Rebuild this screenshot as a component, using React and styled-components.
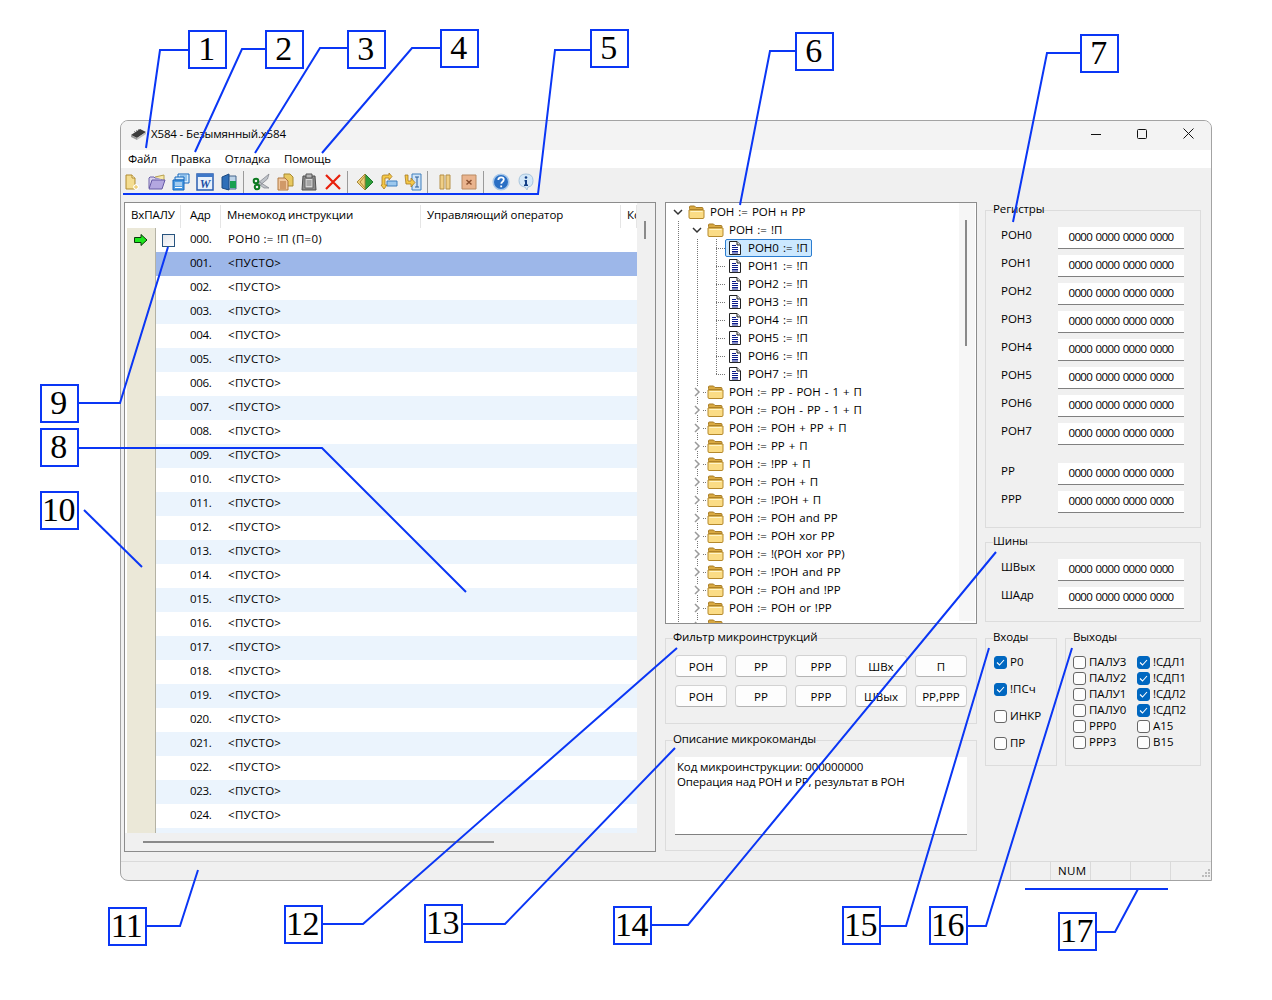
import React from 'react'
import styled, { createGlobalStyle } from 'styled-components'

const GlobalStyle = createGlobalStyle`
  html, body { margin: 0; padding: 0; background: #fff; }
  body { font-family: "Open Sans", "Noto Sans", sans-serif; font-size: 11.5px; color: #000; }
  * { box-sizing: border-box; }
`

const Page = styled.div`
  position: relative;
  width: 1272px;
  height: 1000px;
  padding: 120px 0 0 120px;
  overflow: hidden;
`

const Win = styled.div`
  width: 1092px;
  height: 761px;
  background: #f0f0f0;
  border: 1px solid #a3a3a3;
  border-radius: 8px 8px 0 8px;
  overflow: hidden;
  display: flex;
  flex-direction: column;
`

const TitleBar = styled.div`
  height: 29px;
  padding: 0 0 4px 9px;
  background: #f3f3f3;
  display: flex;
  align-items: center;
  gap: 4px;
  letter-spacing: -0.15px;
`

const WinButtons = styled.div`
  margin-left: auto;
  display: flex;
`

const WinButton = styled.div`
  width: 46px;
  height: 25px;
  display: flex;
  align-items: center;
  justify-content: center;
`

const MenuBar = styled.div`
  height: 18px;
  padding: 0 0 2px 7px;
  background: #fff;
  display: flex;
  align-items: center;
  gap: 14px;
  letter-spacing: -0.15px;
`

const ToolBar = styled.div`
  height: 30px;
  padding-bottom: 2px;
  display: flex;
  align-items: center;
`

const ToolIcon = styled.div`
  flex: none;
  width: 24px;
  height: 24px;
  margin-left: ${p => p.$ml || 0}px;
  display: flex;
  align-items: center;
  justify-content: center;
`

const ToolSep = styled.div`
  flex: none;
  width: 1px;
  height: 22px;
  background: #9a9a9a;
  margin: 0 5px 0 2px;
`

const Main = styled.div`
  flex: 1;
  display: flex;
  padding: 4px 0 0 3px;
`

const ListPanel = styled.div`
  width: 532px;
  height: 650px;
  margin-right: 9px;
  border: 1px solid #8c8c8c;
  display: grid;
  grid-template-columns: 512px 18px;
  grid-template-rows: 25px 605px 18px;
`

const ListHeader = styled.div`
  background: #fff;
  display: flex;
  overflow: hidden;
  letter-spacing: -0.09px;
`

const HeadCell = styled.div`
  flex: none;
  width: ${p => p.$w}px;
  padding-left: ${p => p.$pad}px;
  margin-top: 2px;
  line-height: 19px;
  border-right: 1px solid #e5e5e5;
  white-space: nowrap;
  overflow: hidden;
`

const VBar = styled.div`
  grid-row: 1 / 3;
  grid-column: 2;
  padding: 18px 0 0 7px;
`

const VThumb = styled.div`
  width: 2px;
  height: ${p => p.$h}px;
  background: #8a8a8a;
`

const ListBody = styled.div`
  background: #fff;
  padding-left: 2px;
  overflow: hidden;
`

const Row = styled.div`
  height: 24px;
  display: flex;
  background: ${p => (p.$selected ? '#9db7e9' : p.$alt ? '#ebf4fd' : '#fff')};
`

const GutterCell = styled.div`
  width: 29px;
  background: #ebe8d8;
  border-right: 1px solid #b4b2a4;
  display: flex;
  align-items: center;
  justify-content: center;
`

const BreakCell = styled.div`
  width: 34px;
  display: flex;
  align-items: center;
  padding-left: 6px;
`

const BreakBox = styled.div`
  width: 13px;
  height: 13px;
  border: 1px solid #28547f;
  background: linear-gradient(135deg, #e4e6ea, #fcfcfc);
`

const AddrCell = styled.div`
  width: 38px;
  line-height: 22px;
  letter-spacing: -0.34px;
`

const CodeCell = styled.div`
  line-height: 22px;
  letter-spacing: 0.3px;
`

const HBar = styled.div`
  grid-column: 1;
  padding: 8px 0 0 18px;
`

const HThumb = styled.div`
  width: 351px;
  height: 2px;
  background: #8a8a8a;
`

const MidColumn = styled.div`
  width: 312px;
  margin-right: 8px;
  display: flex;
  flex-direction: column;
`

const TreePanel = styled.div`
  height: 422px;
  margin-bottom: 6px;
  background: #fff;
  border: 1px solid #8c8c8c;
  display: flex;
  overflow: hidden;
`

const TreeBody = styled.div`
  flex: 1;
  padding-left: 3px;
  overflow: hidden;
  word-spacing: 1px;
`

const TreeScroll = styled.div`
  width: 16px;
  margin-bottom: 2px;
  margin-right: 1px;
  background: #f6f6f6;
  padding: 17px 0 0 6px;
`

const TreeRow = styled.div`
  height: 18px;
  display: flex;
  align-items: center;
  white-space: nowrap;
`

const dots = '#777 0 1px, transparent 1px 2px'

const Guide = styled.div`
  flex: none;
  width: 19px;
  height: 18px;
  display: flex;
  align-items: center;
  justify-content: flex-start;
  padding-left: 4px;
  background-repeat: no-repeat;
  background-image:
    ${p => (p.$line ? `repeating-linear-gradient(to bottom, ${dots})` : 'none')},
    ${p => (p.$stub ? `repeating-linear-gradient(to right, ${dots})` : 'none')};
  background-size: 1px ${p => (p.$half ? '9px' : '18px')}, ${p => p.$stub || 0}px 1px;
  background-position: 9px 0, 9px 9px;
`

const ChevronBox = styled.span`
  width: 10px;
  height: 10px;
  background: #fff;
  display: flex;
`

const TreeLabel = styled.div`
  height: 18px;
  display: flex;
  align-items: center;
  margin-left: -1px;
  padding: 0 3px;
  border: 1px solid ${p => (p.$selected ? '#2b7dd0' : 'transparent')};
  border-radius: 2px;
  background: ${p => (p.$selected ? '#cce8ff' : 'transparent')};
`

const TreeText = styled.span`
  margin-left: ${p => p.$ml || 5}px;
  line-height: 14px;
`

const Group = styled.fieldset`
  width: ${p => (p.$w ? `${p.$w}px` : 'auto')};
  margin: 0 0 ${p => p.$mb || 0}px;
  padding: 0;
  min-width: 0;
  border: 1px solid #dcdcdc;
`

const Legend = styled.legend`
  margin-left: 7px;
  padding: 0 0 2px;
  line-height: 14px;
  letter-spacing: -0.12px;
`

const FilterGrid = styled.div`
  display: grid;
  grid-template-columns: repeat(5, 52px);
  grid-auto-rows: 22px;
  gap: 8px;
  padding: 9px 0 16px 9px;
`

const FilterButton = styled.div`
  background: #fdfdfd;
  border: 1px solid #d2d2d2;
  border-bottom-color: #b4b4b4;
  border-radius: 4px;
  display: flex;
  align-items: center;
  justify-content: center;
`

const DescWrap = styled.div`
  padding: 9px 9px 15px;
`

const DescBox = styled.div`
  height: 78px;
  background: #fff;
  border-bottom: 1px solid #808080;
  padding: 2px;
  line-height: 15px;
  letter-spacing: -0.14px;
`

const RightColumn = styled.div`
  width: 216px;
  display: flex;
  flex-direction: column;
`

const RegList = styled.div`
  display: grid;
  grid-template-columns: 57px 126px;
  grid-auto-rows: 22px;
  row-gap: 6px;
  padding: ${p => p.$pt}px 0 ${p => p.$pb}px 15px;
`

const RegName = styled.div`
  line-height: 15px;
`

const RegValue = styled.div`
  background: #fff;
  border-bottom: 1px solid #808080;
  text-align: center;
  line-height: 20px;
  letter-spacing: -0.62px;
  word-spacing: 0.9px;
`

const IoRow = styled.div`
  display: flex;
  gap: 8px;
`

const InputList = styled.div`
  height: 119px;
  display: grid;
  grid-auto-rows: 27px;
  padding: 3px 0 0 8px;
`

const OutputGrid = styled.div`
  height: 119px;
  display: grid;
  grid-template-columns: 64px 64px;
  grid-auto-rows: 16px;
  padding: 8px 0 0 7px;
`

const CheckItem = styled.div`
  display: flex;
  align-items: center;
  gap: 3px;
`

const CheckLabel = styled.span`
  margin-bottom: ${p => (p.$tight ? 0 : 2)}px;
  line-height: 14px;
`

const CheckBox = styled.span`
  flex: none;
  width: 13px;
  height: 13px;
  border-radius: 3px;
  border: 1px solid ${p => (p.$on ? '#0067c0' : '#666')};
  background: ${p => (p.$on ? '#0067c0' : '#fdfdfd')};
  display: flex;
  align-items: center;
  justify-content: center;
`

const StatusBar = styled.div`
  height: 19px;
  border-top: 1px solid #dadada;
  display: flex;
  justify-content: flex-end;
`

const StatusCell = styled.div`
  width: 40px;
  border-left: 1px solid #dadada;
  padding-left: 7px;
  line-height: 18px;
  letter-spacing: 0.3px;
`

const GripCell = styled.div`
  width: 41px;
  border-left: 1px solid #dadada;
  display: flex;
  align-items: flex-end;
  justify-content: flex-end;
`

const Overlay = styled.svg`
  position: absolute;
  left: 0;
  top: 0;
  pointer-events: none;
`

const NoteBox = styled.div`
  position: absolute;
  left: ${p => p.$x}px;
  top: ${p => p.$y}px;
  width: 39px;
  height: 39px;
  padding-right: 2px;
  border: 2px solid #0a36f5;
  background: #fff;
  font-family: "Liberation Serif", serif;
  font-size: 34px;
  line-height: 34px;
  text-align: center;
  letter-spacing: -0.5px;
`

const Chevron = ({ open }) => (
  <ChevronBox>
    <svg width="10" height="10" viewBox="0 0 10 10">
      {open
        ? <path d="M1 3l4 4 4-4" fill="none" stroke="#333" strokeWidth="1.5" />
        : <path d="M3 1l4 4-4 4" fill="none" stroke="#999" strokeWidth="1.5" />}
    </svg>
  </ChevronBox>
)

const FolderIcon = () => (
  <svg width="17" height="14" viewBox="0 0 17 14">
    <path d="M1.5 3.5V2q0-1 1-1h4l1.5 1.5h6q1 0 1 1v1H1.5z" fill="#d9a941" stroke="#a87c26" />
    <path d="M1 5h15v7q0 1.500-1 1.500H2q-1 0-1-1.500z" fill="#fbdc85" stroke="#b5892c" />
    <path d="M2.500 6.500h12" stroke="#fff4c8" />
  </svg>
)

const DocIcon = () => (
  <svg width="12" height="14" viewBox="0 0 12 14">
    <path d="M.5.500h7.500l3.500 3.500v9.500H.500z" fill="#fff" stroke="#222" />
    <path d="M8 .500v3.500h3.500" fill="#ddd" stroke="#222" />
    <path d="M3 4.500h4M3 6.500h6M3 8.500h6M3 10.500h6M3 12h6" stroke="#0a1a8a" />
  </svg>
)

const ChipIcon = () => (
  <svg width="17" height="14" viewBox="0 0 17 14">
    <path d="M1 8l9-6 6 3-9 6z" fill="#3c3c3c" />
    <path d="M1 8l6 3v2l-6-3z" fill="#9a9a9a" />
    <path d="M7 11l9-6v2l-9 6z" fill="#bdbdbd" />
    <path d="M4 5l1-1M6 4l1-1M8 3l1-1" stroke="#999" />
  </svg>
)

const ArrowIcon = () => (
  <svg width="14" height="12" viewBox="0 0 14 12">
    <path d="M.5 3.500h6.500V.500l6 5.500-6 5.500V8.500H.500z" fill="#1fe61f" stroke="#0a3a0a" />
  </svg>
)

const toolIcons = {
  newDoc: (
    <>
      <path d="M4 2h6l3 3v11H4z" fill="#f4dd90" stroke="#b08b30" />
      <path d="M10 2v3h3" fill="#fff6d0" stroke="#b08b30" />
      <path d="M14 11v6M11 14h6M12 12l4 4M16 12l-4 4" stroke="#fff" strokeWidth="1.500" />
      <path d="M14 12v4M12 14h4" stroke="#e8c050" />
    </>
  ),
  open: (
    <>
      <path d="M1 15V5l1-1h4l1 1h6l1 1v2" fill="#d9d3ee" stroke="#6c60a8" />
      <path d="M7 4l9-2v5" fill="#f7e9a8" stroke="#b8a050" />
      <path d="M1 16l3-9h13l-3 9z" fill="#b3a7e0" stroke="#6559a5" />
    </>
  ),
  saveAll: (
    <>
      <path d="M6 1h11v9H6z" fill="#d8ecfb" stroke="#1467bd" />
      <path d="M8 3h7M8 5h7M8 7h7" stroke="#4b9ae0" />
      <path d="M3 4h9v3H3z" fill="#d8ecfb" stroke="#1467bd" />
      <path d="M1 7h11v10H1z" fill="#4b9ae0" stroke="#1467bd" />
      <path d="M3 10h7M3 12h7M3 14.500h7" stroke="#fff" />
    </>
  ),
  word: (
    <>
      <path d="M1 1h16v16H1z" fill="#e9f1fb" stroke="#2a5cb0" strokeWidth="1.500" />
      <path d="M1 1h16v3H1z" fill="#3f78c8" />
      <text x="9" y="15" textAnchor="middle" fontFamily="Liberation Serif, serif" fontSize="12" fontWeight="700" fontStyle="italic" fill="#1f4fa5">W</text>
    </>
  ),
  exit: (
    <>
      <path d="M6 3h10v13H6z" fill="#bcd3e8" stroke="#44658a" />
      <path d="M10 8h6v7h-6z" fill="#18a050" />
      <path d="M2 4l7-3v16l-7-2z" fill="#2f6fb8" stroke="#1c4a80" />
    </>
  ),
  cut: (
    <>
      <path d="M6 10L17 1l-1.500 5-7 6zM6 8l11 7-5 0-7-5z" fill="#bfc3c9" stroke="#7c8088" strokeWidth=".7" />
      <circle cx="4" cy="8" r="2.300" fill="none" stroke="#0c7a20" strokeWidth="2" />
      <circle cx="5" cy="14" r="2.300" fill="none" stroke="#0c7a20" strokeWidth="2" />
    </>
  ),
  copy: (
    <>
      <path d="M8 1h6l3 3v9H8z" fill="#e8c860" stroke="#a88a30" />
      <path d="M2 5h7l3 3v9H2z" fill="#f0c8a0" stroke="#b07840" />
      <path d="M4 9h6M4 11h6M4 13h6M4 15h6" stroke="#b06a30" />
    </>
  ),
  paste: (
    <>
      <path d="M3 3h12l1 14H2z" fill="#8d8d8d" stroke="#4e4e4e" />
      <path d="M5 5h8v10H5z" fill="#d8d8d8" stroke="#666" />
      <path d="M6 1h6v4H6z" fill="#b6b6b6" stroke="#555" />
      <path d="M6.500 8h5M6.500 10h5M6.500 12h5" stroke="#777" />
    </>
  ),
  del: <path d="M2 2l14 14M16 2L2 16" stroke="#e8200c" strokeWidth="2.200" />,
  diamond: (
    <>
      <path d="M9 1l8 8-8 8z" fill="#2f9e3a" stroke="#1e7a2a" />
      <path d="M9 1L1 9l8 8z" fill="#eed07a" stroke="#a8883a" />
      <path d="M9 3L4 9l5 6" fill="none" stroke="#b08a38" />
    </>
  ),
  stepOver: (
    <>
      <path d="M7 8h10v5H7z" fill="#9cc8ee" stroke="#3e7fbd" />
      <path d="M9 2H4q-2 0-2 2v8h-1l3 4 3-4H5V5h4v2l3-3.500L9 0z" fill="#f4c848" stroke="#a87a20" strokeWidth=".8" />
    </>
  ),
  stepInto: (
    <>
      <path d="M8 1h9v16H8z" fill="#cfe4f7" stroke="#3e7fbd" />
      <path d="M11 4h4M13 4v10M11 14h4" stroke="#2a5f9c" />
      <path d="M1 2h3v6h3V5l4 4.500-4 4.500v-3H2z" fill="#f4c848" stroke="#a87a20" strokeWidth=".8" />
    </>
  ),
  pause: (
    <>
      <path d="M4 2h4v14H4zM10 2h4v14h-4z" fill="#f0cf86" stroke="#b59048" />
    </>
  ),
  stop: (
    <>
      <path d="M2 2h14v14H2z" fill="#eab48e" stroke="#b98a62" />
      <path d="M6.500 7l5 4.500M11.500 7l-5 4.500" stroke="#8a5030" strokeWidth="1.500" />
    </>
  ),
  help: (
    <>
      <circle cx="9" cy="9" r="7.800" fill="#2a6fc4" stroke="#a8c8ea" strokeWidth="1.600" />
      <path d="M6.300 7q0-2.700 2.800-2.700 2.700 0 2.700 2.300 0 1.500-1.500 2.300-1 .600-1 1.800" fill="none" stroke="#fff" strokeWidth="1.800" />
      <path d="M8.300 12.400h1.800v1.800H8.300z" fill="#fff" />
    </>
  ),
  info: (
    <>
      <path d="M9 1q7 0 7 6.500 0 6-5 6.500l-1 3-2-3q-6-.500-6-6.500Q2 1 9 1z" fill="#d4e8f8" stroke="#a8c4dc" />
      <circle cx="9" cy="4.500" r="1.300" fill="#123f86" />
      <path d="M7.500 7H10v4.500h1V13H7v-1.500h1v-3h-.500z" fill="#123f86" />
    </>
  ),
}

const Tool = ({ name, ml }) => (
  <ToolIcon $ml={ml}>
    <svg width="18" height="18" viewBox="0 0 18 18">{toolIcons[name]}</svg>
  </ToolIcon>
)

const Check = ({ on, tight, children }) => (
  <CheckItem>
    <CheckBox $on={on}>
      {on && (
        <svg width="9" height="9" viewBox="0 0 9 9">
          <path d="M1 4.500l2.500 2.500L8 2" fill="none" stroke="#fff" strokeWidth="1.100" />
        </svg>
      )}
    </CheckBox>
    <CheckLabel $tight={tight}>{children}</CheckLabel>
  </CheckItem>
)

const registers = ['РОН0', 'РОН1', 'РОН2', 'РОН3', 'РОН4', 'РОН5', 'РОН6', 'РОН7']
const extraRegisters = ['РР', 'РРР']
const ZERO = '0000 0000 0000 0000'

const collapsed = [
  'РОН := РР - РОН - 1 + П',
  'РОН := РОН - РР - 1 + П',
  'РОН := РОН + РР + П',
  'РОН := РР + П',
  'РОН := !РР + П',
  'РОН := РОН + П',
  'РОН := !РОН + П',
  'РОН := РОН and РР',
  'РОН := РОН xor РР',
  'РОН := !(РОН xor РР)',
  'РОН := !РОН and РР',
  'РОН := РОН and !РР',
  'РОН := РОН or !РР',
  '',
]

const filterButtons = ['РОН', 'РР', 'РРР', 'ШВх', 'П', 'РОН', 'РР', 'РРР', 'ШВых', 'РР,РРР']

const inputs = [['Р0', true], ['!ПСч', true], ['ИНКР', false], ['ПР', false]]

const outputs = [
  ['ПАЛУ3', false], ['!СДЛ1', true],
  ['ПАЛУ2', false], ['!СДП1', true],
  ['ПАЛУ1', false], ['!СДЛ2', true],
  ['ПАЛУ0', false], ['!СДП2', true],
  ['РРР0', false], ['А15', false],
  ['РРР3', false], ['В15', false],
]

const notes = [
  { n: 1, x: 188, y: 30, line: '188,50 160,50 146,148' },
  { n: 2, x: 265, y: 30, line: '266,49 242,49 195,152' },
  { n: 3, x: 347, y: 30, line: '347,48 320,48 255,153' },
  { n: 4, x: 440, y: 29, line: '441,48 412,48 322,153' },
  { n: 5, x: 590, y: 29, line: '591,50 555,50 538,194 123,194' },
  { n: 6, x: 795, y: 32, line: '795,51 770,51 740,205' },
  { n: 7, x: 1080, y: 34, line: '1081,53 1047,53 1013,222' },
  { n: 8, x: 40, y: 428, line: '78,448 322,448 466,592' },
  { n: 9, x: 40, y: 384, line: '78,403 120,403 168,247' },
  { n: 10, x: 40, y: 491, line: '84,510 142,567' },
  { n: 11, x: 108, y: 907, line: '146,926 180,926 198,870' },
  { n: 12, x: 284, y: 905, line: '322,924 363,924 677,648' },
  { n: 13, x: 424, y: 904, line: '462,924 505,924 675,748' },
  { n: 14, x: 613, y: 906, line: '651,925 688,925 996,552' },
  { n: 15, x: 842, y: 906, line: '880,926 906,926 989,648' },
  { n: 16, x: 929, y: 906, line: '967,926 986,926 1072,648' },
  { n: 17, x: 1058, y: 912, line: '1095,932 1115,932 1138,889' },
]

function App() {
  const rows = Array.from({ length: 26 }, (_, i) => i)

  return (
    <Page>
      <GlobalStyle />
      <Win>
        <TitleBar>
          <ChipIcon />
          <span>X584 - Безымянный.x584</span>
          <WinButtons>
            <WinButton>
              <svg width="10" height="10" viewBox="0 0 10 10"><path d="M0 5.500h10" stroke="#111" /></svg>
            </WinButton>
            <WinButton>
              <svg width="10" height="10" viewBox="0 0 10 10"><rect x=".5" y=".5" width="9" height="9" rx="1" fill="none" stroke="#111" /></svg>
            </WinButton>
            <WinButton>
              <svg width="11" height="11" viewBox="0 0 11 11"><path d="M.5.500l10 10M10.500.500l-10 10" stroke="#111" /></svg>
            </WinButton>
          </WinButtons>
        </TitleBar>

        <MenuBar>
          <span>Файл</span>
          <span>Правка</span>
          <span>Отладка</span>
          <span>Помощь</span>
        </MenuBar>

        <ToolBar>
          <Tool name="newDoc" ml={-2} />
          <Tool name="open" ml={2} />
          <Tool name="saveAll" />
          <Tool name="word" />
          <Tool name="exit" />
          <ToolSep />
          <Tool name="cut" />
          <Tool name="copy" />
          <Tool name="paste" />
          <Tool name="del" />
          <ToolSep />
          <Tool name="diamond" />
          <Tool name="stepOver" />
          <Tool name="stepInto" />
          <ToolSep />
          <Tool name="pause" />
          <Tool name="stop" />
          <ToolSep />
          <Tool name="help" />
          <Tool name="info" ml={1} />
        </ToolBar>

        <Main>
          <ListPanel>
            <ListHeader>
              <HeadCell $w={56} $pad={6}>ВхПАЛУ</HeadCell>
              <HeadCell $w={40} $pad={9}>Адр</HeadCell>
              <HeadCell $w={200} $pad={6}>Мнемокод инструкции</HeadCell>
              <HeadCell $w={200} $pad={6}>Управляющий оператор</HeadCell>
              <HeadCell $w={16} $pad={6}>Ко</HeadCell>
            </ListHeader>
            <VBar><VThumb $h={18} /></VBar>
            <ListBody>
              {rows.map(i => (
                <Row key={i} $selected={i === 1} $alt={i > 1 && i % 2 === 1}>
                  <GutterCell>{i === 0 && <ArrowIcon />}</GutterCell>
                  <BreakCell>{i === 0 && <BreakBox />}</BreakCell>
                  <AddrCell>{i < 25 && `${String(i).padStart(3, '0')}.`}</AddrCell>
                  <CodeCell>{i === 0 ? 'РОН0 := !П (П=0)' : i < 25 ? '<ПУСТО>' : ''}</CodeCell>
                </Row>
              ))}
            </ListBody>
            <HBar><HThumb /></HBar>
          </ListPanel>

          <MidColumn>
            <TreePanel>
              <TreeBody>
                <TreeRow>
                  <Guide $stub={4}><Chevron open /></Guide>
                  <FolderIcon />
                  <TreeText>РОН := РОН н РР</TreeText>
                </TreeRow>
                <TreeRow>
                  <Guide $line />
                  <Guide $stub={4}><Chevron open /></Guide>
                  <FolderIcon />
                  <TreeText>РОН := !П</TreeText>
                </TreeRow>
                {[0, 1, 2, 3, 4, 5, 6, 7].map(i => (
                  <TreeRow key={i}>
                    <Guide $line />
                    <Guide $line />
                    <Guide $line $half={i === 7} $stub={10} />
                    <TreeLabel $selected={i === 0}>
                      <DocIcon />
                      <TreeText $ml={7}>{`РОН${i} := !П`}</TreeText>
                    </TreeLabel>
                  </TreeRow>
                ))}
                {collapsed.map(label => (
                  <TreeRow key={label}>
                    <Guide $line />
                    <Guide $line $stub={9}><Chevron /></Guide>
                    <FolderIcon />
                    <TreeText>{label}</TreeText>
                  </TreeRow>
                ))}
              </TreeBody>
              <TreeScroll><VThumb $h={126} /></TreeScroll>
            </TreePanel>

            <Group $mb={8}>
              <Legend>Фильтр микроинструкций</Legend>
              <FilterGrid>
                {filterButtons.map((b, i) => <FilterButton key={i}>{b}</FilterButton>)}
              </FilterGrid>
            </Group>

            <Group>
              <Legend>Описание микрокоманды</Legend>
              <DescWrap>
                <DescBox>
                  Код микроинструкции: 000000000
                  <br />
                  Операция над РОН и РР, результат в РОН
                </DescBox>
              </DescWrap>
            </Group>
          </MidColumn>

          <RightColumn>
            <Group $mb={6}>
              <Legend>Регистры</Legend>
              <RegList $pt={9} $pb={18}>
                {registers.map(r => (
                  <React.Fragment key={r}>
                    <RegName>{r}</RegName>
                    <RegValue>{ZERO}</RegValue>
                  </React.Fragment>
                ))}
              </RegList>
              <RegList $pt={0} $pb={14}>
                {extraRegisters.map(r => (
                  <React.Fragment key={r}>
                    <RegName>{r}</RegName>
                    <RegValue>{ZERO}</RegValue>
                  </React.Fragment>
                ))}
              </RegList>
            </Group>

            <Group $mb={8}>
              <Legend>Шины</Legend>
              <RegList $pt={9} $pb={12}>
                <RegName>ШВых</RegName>
                <RegValue>{ZERO}</RegValue>
                <RegName>ШАдр</RegName>
                <RegValue>{ZERO}</RegValue>
              </RegList>
            </Group>

            <IoRow>
              <Group $w={72}>
                <Legend>Входы</Legend>
                <InputList>
                  {inputs.map(([label, on]) => <Check key={label} on={on}>{label}</Check>)}
                </InputList>
              </Group>
              <Group $w={136}>
                <Legend>Выходы</Legend>
                <OutputGrid>
                  {outputs.map(([label, on]) => <Check key={label} on={on} tight>{label}</Check>)}
                </OutputGrid>
              </Group>
            </IoRow>
          </RightColumn>
        </Main>

        <StatusBar>
          <StatusCell />
          <StatusCell>NUM</StatusCell>
          <StatusCell />
          <StatusCell />
          <GripCell>
            <svg width="12" height="12" viewBox="0 0 12 12">
              <path d="M9 1h2v2H9zM6 4h2v2H6zM9 4h2v2H9zM3 7h2v2H3zM6 7h2v2H6zM9 7h2v2H9z" fill="#bdbdbd" />
            </svg>
          </GripCell>
        </StatusBar>
      </Win>

      <Overlay width="1272" height="1000">
        {notes.map(note => (
          <polyline key={note.n} points={note.line} fill="none" stroke="#0a36f5" strokeWidth="2" />
        ))}
        <line x1="1025" y1="889" x2="1168" y2="889" stroke="#0a36f5" strokeWidth="2" />
      </Overlay>
      {notes.map(note => <NoteBox key={note.n} $x={note.x} $y={note.y}>{note.n}</NoteBox>)}
    </Page>
  )
}

export default App
